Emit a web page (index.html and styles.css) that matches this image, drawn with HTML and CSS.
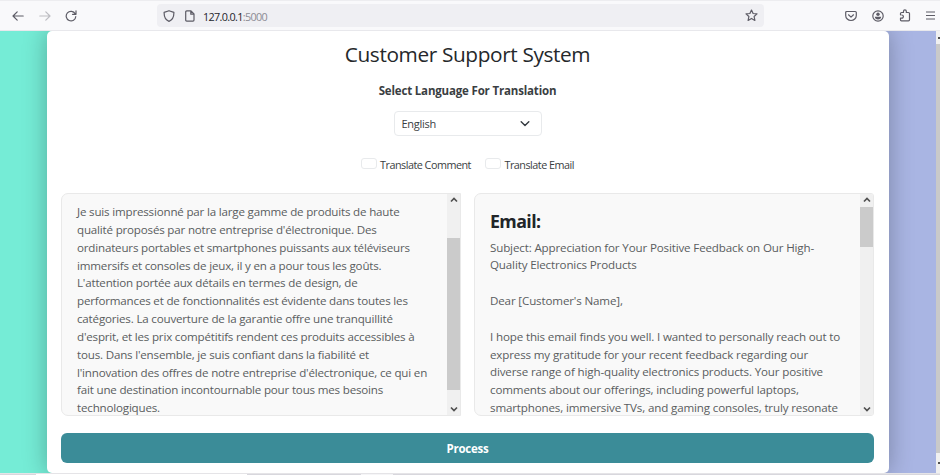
FILE: index.html
```html
<!DOCTYPE html>
<html lang="en">
<head>
<meta charset="utf-8">
<title>Customer Support System</title>
<link rel="stylesheet" href="styles.css">
</head>
<body>
<header class="toolbar">
  <nav class="nav">
    <svg width="12" height="12" viewBox="0 0 12 12"><path d="M11.2 6H1M5.2 1.8 1 6l4.200 4.200"/></svg>
    <svg class="dim" width="12" height="12" viewBox="0 0 12 12"><path d="M.8 6H11M6.800 1.800 11 6l-4.200 4.200"/></svg>
    <svg width="12" height="12" viewBox="0 0 12 12"><path d="M10.200 3.800A4.800 4.800 0 1 0 10.800 6.500M11 .8v3.500H7.500"/></svg>
  </nav>
  <div class="address">
    <svg width="12" height="12" viewBox="0 0 12 12"><path d="M6 .7 10.900 2.400C11 7 9.500 10 6 11.400 2.500 10 1 7 1.100 2.400Z"/></svg>
    <svg class="page-icon" width="10" height="12" viewBox="0 0 10 12"><path d="M1.700.9H6l3 3v6.200q0 1-1 1H1.700q-1 0-1-1V1.900q0-1 1-1ZM5.800 1v3.200H9"/></svg>
    <span class="url">127.0.0.1<span class="port">:5000</span></span>
    <svg class="star" width="13" height="13" viewBox="0 0 13 13"><path d="m6.500 1 1.600 3.500 3.900.4-2.900 2.600.8 3.900-3.400-2-3.400 2 .8-3.900L1 4.900l3.900-.4Z"/></svg>
  </div>
  <div class="tools">
    <svg width="12" height="12" viewBox="0 0 12 12"><path d="M1.700 1.500h8.600q1 0 1 1V5.500a5.300 5 0 0 1-10.600 0v-3q0-1 1-1ZM3.500 4.800 6 7.100l2.500-2.300"/></svg>
    <svg width="12" height="12" viewBox="0 0 12 12"><circle cx="6" cy="6" r="5.200"/><circle class="solid" cx="6" cy="4.200" r="1.700"/><path class="solid" d="M2.800 6.800h6.400Q8.900 9.500 6 9.500T2.800 6.800Z"/></svg>
    <svg width="12" height="13" viewBox="0 0 12 13"><path d="M1.500 5.800V4.500q0-1 1-1h2V2.300a1.400 1.400 0 0 1 2.800 0v1.200h2.200q1 0 1 1v6.300q0 1-1 1h-7q-1 0-1-1V9.200h1.300a1.500 1.500 0 0 0 0-3.200"/></svg>
    <svg class="menu" width="9" height="9" viewBox="0 0 9 9"><path d="M0 1h9M0 4.500h9M0 8h9"/></svg>
  </div>
</header>
<div class="viewport">
  <main class="card">
    <h1>Customer Support System</h1>
    <h2>Select Language For Translation</h2>
    <div class="select"><span>English</span><svg width="10" height="6" viewBox="0 0 10 6"><path d="m1.200.8 3.800 3.700L8.800.8"/></svg></div>
    <div class="checks">
      <label><i class="box"></i>Translate Comment</label>
      <label><i class="box"></i>Translate Email</label>
    </div>
    <div class="panels">
      <section class="panel">
        <div class="text comment">Je suis impressionné par la large gamme de produits de haute<br>qualité proposés par notre entreprise d'électronique. Des<br>ordinateurs portables et smartphones puissants aux téléviseurs<br>immersifs et consoles de jeux, il y en a pour tous les goûts.<br>L'attention portée aux détails en termes de design, de<br>performances et de fonctionnalités est évidente dans toutes les<br>catégories. La couverture de la garantie offre une tranquillité<br>d'esprit, et les prix compétitifs rendent ces produits accessibles à<br>tous. Dans l'ensemble, je suis confiant dans la fiabilité et<br>l'innovation des offres de notre entreprise d'électronique, ce qui en<br>fait une destination incontournable pour tous mes besoins<br>technologiques.</div>
        <div class="bar"><svg width="8" height="6" viewBox="0 0 8 6"><path d="m1 4.500 3-3 3 3"/></svg><i class="thumb long"></i><svg width="8" height="6" viewBox="0 0 8 6"><path d="m1 1.500 3 3 3-3"/></svg></div>
      </section>
      <section class="panel">
        <div class="text email"><h3>Email:</h3>Subject: Appreciation for Your Positive Feedback on Our High-<br>Quality Electronics Products<br><br>Dear [Customer's Name],<br><br>I hope this email finds you well. I wanted to personally reach out to<br>express my gratitude for your recent feedback regarding our<br>diverse range of high-quality electronics products. Your positive<br>comments about our offerings, including powerful laptops,<br>smartphones, immersive TVs, and gaming consoles, truly resonate</div>
        <div class="bar"><svg width="8" height="6" viewBox="0 0 8 6"><path d="m1 4.500 3-3 3 3"/></svg><i class="thumb short"></i><svg width="8" height="6" viewBox="0 0 8 6"><path d="m1 1.500 3 3 3-3"/></svg></div>
      </section>
    </div>
    <button class="process">Process</button>
  </main>
  <div class="page-bar"><i class="arrow up"></i><i class="page-thumb"></i><i class="arrow down"></i></div>
</div>
<footer class="taskbar"><i class="tab"></i><i class="tab-two"></i></footer>
</body>
</html>
```
FILE: styles.css
```css
* { box-sizing: border-box; }
body { margin: 0; width: 940px; height: 475px; overflow: hidden; display: flex; flex-direction: column; font-family: "Open Sans", sans-serif; color: #3a3e42; background: #fff; }
svg { display: block; fill: none; stroke: #5d5c66; stroke-width: 1.2; stroke-linecap: round; stroke-linejoin: round; flex: none; }
.toolbar { height: 31px; flex: none; display: flex; align-items: center; background: #f9f9fb; border-top: 1px solid #ededf0; border-bottom: 1px solid #e8e8ec; }
.nav { width: 157px; padding-left: 12px; display: flex; gap: 14.500px; }
.nav .dim { stroke: #bdbdc2; }
.address { width: 607px; height: 23px; border-radius: 4px; background: #efeff3; display: flex; align-items: center; padding: 0 6px; }
.page-icon { margin-left: 10px; }
.url { margin-left: 8px; font-size: 10.800px; letter-spacing: -.640px; color: #25252c; position: relative; top: .5px; }
.port { color: #8c8c94; }
.star { margin-left: auto; }
.tools { margin-left: 81px; display: flex; align-items: center; gap: 15px; }
.menu { stroke-width: 1; stroke-linecap: butt; }
.solid { fill: #5d5c66; stroke: none; }
.viewport { height: 441.500px; flex: none; display: flex; overflow: hidden; background: linear-gradient(90deg, #75ecd6 0, #75ecd6 5%, #a9b5e3 95%, #a9b5e3 100%); }
.card { width: 842px; margin-left: 46.500px; padding: 0 15px; background: #fff; border-radius: 5px; box-shadow: 0 0 24px rgba(0,0,0,.28); display: flex; flex-direction: column; align-items: center; }
h1 { margin: 7px 0 0; font-size: 20.800px; line-height: 32px; font-weight: 400; letter-spacing: -.370px; color: #25282b; white-space: nowrap; }
h2 { margin: 12px 0 0; font-size: 11.500px; line-height: 18px; font-weight: 700; letter-spacing: -.170px; }
.select { width: 148px; height: 25px; margin-top: 11px; border: 1px solid #e8eaec; border-radius: 4px; padding: 0 11px 0 7px; display: flex; justify-content: space-between; align-items: center; font-size: 11px; letter-spacing: -.280px; }
.select svg { stroke: #343a40; stroke-width: 1.400; }
.checks { margin-top: 20px; display: flex; gap: 14.500px; font-size: 10.800px; line-height: 18px; letter-spacing: -.500px; }
.checks label { display: flex; align-items: center; gap: 3px; white-space: nowrap; }
.box { width: 16px; height: 11px; border: 1px solid #e8eaec; border-radius: 3px; margin-top: -3px; }
.panels { width: 813px; margin-top: 19px; display: grid; grid-template-columns: 400px 400px; gap: 13px; }
.panel { height: 223px; display: flex; overflow: hidden; border: 1px solid #e9e9e9; border-radius: 7px 0 0 7px; background: #f9f9f9; }
.panel:last-child { border-radius: 7px 3px 3px 7px; }
.text { flex: 1; min-width: 0; padding-left: 15px; font-size: 11.600px; line-height: 17.850px; letter-spacing: -.190px; color: #5a5d60; white-space: nowrap; }
.comment { padding-top: 9px; }
.email { padding-top: 15px; letter-spacing: -.150px; }
h3 { margin: 0 0 5.500px; font-size: 17.800px; line-height: 24px; letter-spacing: -.600px; font-weight: 700; color: #212529; }
.bar { width: 13px; flex: none; background: #f0f0f0; display: flex; flex-direction: column; align-items: center; padding: 3px 0; }
.bar svg { stroke: #505050; stroke-width: 1.700; stroke-linecap: butt; stroke-linejoin: miter; }
.bar svg:last-child { margin-top: auto; }
.thumb { width: 13px; background: #cbcbcb; }
.long { height: 152px; margin-top: 35px; }
.short { height: 40px; margin-top: 4px; }
.process { width: 813px; height: 30px; margin-top: 17px; border: 0; border-radius: 6px; background: #3b8c98; color: #fff; font: 700 11.500px "Open Sans", sans-serif; letter-spacing: -.250px; flex: none; }
.page-bar { width: 4.500px; margin-left: auto; background: #f0f0f0; display: flex; flex-direction: column; justify-content: space-between; }
.page-thumb { height: 409px; background: #c9c9c9; }
.arrow { height: 13px; display: flex; align-items: center; justify-content: flex-end; }
.arrow.down { height: 19px; }
.arrow::after { content: ""; width: 2px; height: 2px; background: #505050; }
.taskbar { flex: 1; background: #d8d7dd; display: flex; border-top: 1px solid #e5e4e7; }
.tab { width: 211px; margin-left: 36px; background: #fff; }
.tab-two { width: 32px; margin-left: 114px; background: #f5f5f7; }
```
